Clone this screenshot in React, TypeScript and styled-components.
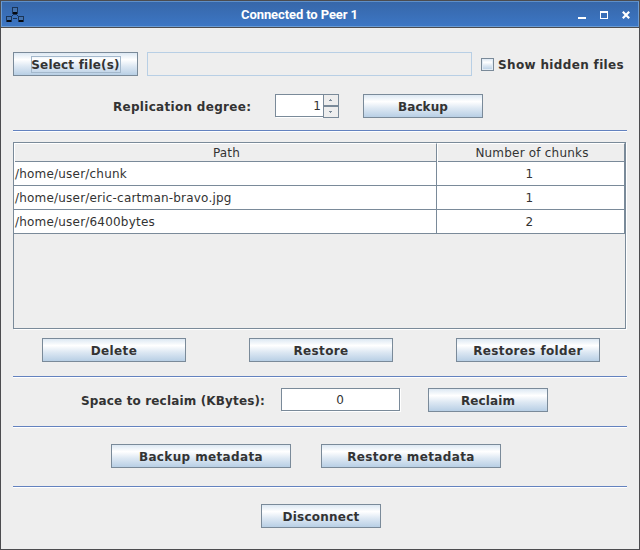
import React from 'react';
import styled, { createGlobalStyle } from 'styled-components';

const Global = createGlobalStyle`
  * { box-sizing: border-box; }
  body { margin: 0; background: #eeeeee; }
`;

const steel = '#7a8a99';
const ink = '#333333';

const Frame = styled.div`
  width: 640px;
  height: 550px;
  border: 1px solid #4c4c4f;
  background: #eeeeee;
  color: ${ink};
  font: 12px/16px 'DejaVu Sans', sans-serif;
  overflow: hidden;
`;

const TitleBar = styled.header`
  display: grid;
  grid-template-columns: 60px 1fr 60px;
  align-items: center;
  height: 26px;
  border: 1px solid #6a9bd4;
  border-top-color: #5e8fc9;
  background: linear-gradient(#3767a9, #3c76c4);
`;

const TitleEdge = styled.div`
  height: 1px;
  background: #4c4c4f;
`;

const Title = styled.h1`
  margin: 0;
  padding-top: 1px;
  padding-right: 41px;
  text-align: center;
  color: #ffffff;
  font: bold 13px/24px Roboto, sans-serif;
  letter-spacing: -0.1px;
`;

const PeerIcon = styled.svg`
  width: 20px;
  height: 18px;
  margin-left: 3px;
`;

const WindowControls = styled.svg`
  width: 60px;
  height: 24px;
`;

const Content = styled.main`
  display: flex;
  flex-direction: column;
  padding: 24px 12px 0;
`;

const Row = styled.div<{ $gap?: number; $indent?: number; $top?: number }>`
  display: flex;
  align-items: flex-start;
  height: 24px;
  gap: ${p => p.$gap ?? 0}px;
  margin-top: ${p => p.$top ?? 0}px;
  padding-left: ${p => p.$indent ?? 0}px;
`;

const Button = styled.button<{ $width: number; $spacing?: number }>`
  display: flex;
  align-items: center;
  justify-content: center;
  flex: none;
  width: ${p => p.$width}px;
  height: 24px;
  padding: 1px 0 0;
  border: 1px solid ${steel};
  border-radius: 0;
  background: linear-gradient(#dde8f3 0%, #ffffff 30%, #dde8f3 60%, #b8cfe5 100%);
  color: ${ink};
  font: bold 12px/16px 'DejaVu Sans', sans-serif;
  letter-spacing: ${p => p.$spacing ?? 0.37}px;
  white-space: nowrap;
`;

const FocusRing = styled.span`
  display: flex;
  justify-content: center;
  height: 17px;
  width: 90px;
  margin-top: -1px;
  border: 1px solid #a3b8cc;
  line-height: 16px;
`;

const DisabledField = styled.div`
  flex: none;
  width: 325px;
  height: 24px;
  margin: 0 9px;
  border: 1px solid #b8cfe5;
`;

const CheckLabel = styled.label`
  display: flex;
  align-items: center;
  gap: 4px;
  height: 25px;
  font-weight: bold;
  letter-spacing: 0.35px;
  white-space: nowrap;
`;

const CheckBox = styled.span`
  width: 13px;
  height: 13px;
  border: 1px solid ${steel};
  background: linear-gradient(#dde8f3, #ffffff 30%, #dde8f3 60%, #b8cfe5);
  box-shadow: inset 0 0 0 1px #e3ecf5;
`;

const Label = styled.span<{ $width: number; $spacing: number }>`
  flex: none;
  width: ${p => p.$width}px;
  font-weight: bold;
  letter-spacing: ${p => p.$spacing}px;
  line-height: 26px;
  white-space: nowrap;
`;

const Spinner = styled.div`
  display: flex;
  width: 64px;
  height: 24px;
  margin-right: 24px;
`;

const SpinnerValue = styled.span`
  width: 48px;
  height: 23px;
  padding-right: 2px;
  border: 1px solid ${steel};
  border-right: 0;
  background: #ffffff;
  box-shadow: 1px 1px #ffffff;
  text-align: right;
  line-height: 22px;
`;

const Arrows = styled.svg`
  width: 16px;
  height: 24px;
`;

const Separator = styled.div<{ $top: number }>`
  height: 2px;
  margin-top: ${p => p.$top}px;
  background: #ffffff;
  border-top: 1px solid #6382bf;
`;

const ScrollPane = styled.section`
  height: 187px;
  width: 613px;
  margin-top: 10px;
  border: 1px solid ${steel};
  box-shadow: 1px 1px #ffffff;
`;

const Record = styled.div`
  display: grid;
  grid-template-columns: 423px 188px;
  height: 24px;
  background: #ffffff;
  border-bottom: 1px solid ${steel};
  line-height: 24px;
`;

const HeaderRecord = styled(Record)`
  height: 19px;
  background: #eeeeee;
  line-height: 19px;
`;

const Cell = styled.span<{ $center?: boolean }>`
  height: 100%;
  padding-left: 1px;
  padding-right: ${p => (p.$center ? 3 : 0)}px;
  border-right: 1px solid ${steel};
  text-align: ${p => (p.$center ? 'center' : 'left')};
  letter-spacing: 0.2px;
`;

const HeaderCell = styled(Cell)`
  padding-left: 3px;
  padding-right: 0;
  border-top: 1px solid #ffffff;
  box-shadow: inset 1px 0 #ffffff;
`;

const ReclaimField = styled.div`
  width: 119px;
  height: 23px;
  margin-right: 28px;
  padding-right: 1px;
  border: 1px solid ${steel};
  background: #ffffff;
  box-shadow: 1px 1px #ffffff;
  text-align: center;
  line-height: 22px;
`;

const files = [
  { path: '/home/user/chunk', chunks: 1 },
  { path: '/home/user/eric-cartman-bravo.jpg', chunks: 1 },
  { path: '/home/user/6400bytes', chunks: 2 },
];

export default function App() {
  return (
    <>
      <Global />
      <Frame>
        <TitleBar>
          <PeerIcon viewBox="0 0 20 18" shapeRendering="crispEdges">
            <path d="M7.5 1.5h5v6h-5zM1.5 10.5h5v5h-5zM13.5 10.5h5v5h-5z" fill="#4472ad" stroke="#1b3557" />
            <path d="M8 6h4v2H8zM2 14h4v2H2zM14 14h4v2h-4z" fill="#050a12" />
            <path d="M7 9.5h1M8 8.5h4M12 9.5h1M8 12.5h4" fill="none" stroke="#1b3557" />
          </PeerIcon>
          <Title>Connected to Peer 1</Title>
          <WindowControls viewBox="0 0 60 24">
            <path d="M0 14h8v2H0z" fill="#fff" />
            <path d="M22 8h8v8h-8zM23 10v5h6v-5z" fill="#fff" fillRule="evenodd" />
            <path d="M44.8 8.8l6.4 6.4M51.2 8.8l-6.4 6.4" stroke="#fff" strokeWidth="2.2" />
          </WindowControls>
        </TitleBar>
        <TitleEdge />
        <Content>
          <Row>
            <Button $width={125} $spacing={0.2}><FocusRing>Select file(s)</FocusRing></Button>
            <DisabledField />
            <CheckLabel><CheckBox />Show hidden files</CheckLabel>
          </Row>
          <Row $top={18} $indent={100}>
            <Label $width={162} $spacing={0.3}>Replication degree:</Label>
            <Spinner>
              <SpinnerValue>1</SpinnerValue>
              <Arrows viewBox="0 0 16 24" shapeRendering="crispEdges">
                <path d="M.5.5h15v11H.5zM.5 12.5h15v11H.5z" fill="#eee" stroke={steel} />
                <path d="M7 5h1v1h1v1H6V6h1zM6 17h3v1H8v1H7v-1H6z" fill={steel} />
              </Arrows>
            </Spinner>
            <Button $width={120} $spacing={0.05}>Backup</Button>
          </Row>
          <Separator $top={12} />
          <ScrollPane>
            <HeaderRecord>
              <HeaderCell $center>Path</HeaderCell>
              <HeaderCell $center>Number of chunks</HeaderCell>
            </HeaderRecord>
            {files.map(f => (
              <Record key={f.path}>
                <Cell>{f.path}</Cell>
                <Cell $center>{f.chunks}</Cell>
              </Record>
            ))}
          </ScrollPane>
          <Row $top={9} $indent={29} $gap={63}>
            <Button $width={144}>Delete</Button>
            <Button $width={144}>Restore</Button>
            <Button $width={144}>Restores folder</Button>
          </Row>
          <Separator $top={14} />
          <Row $top={10} $indent={68}>
            <Label $width={200} $spacing={0.15}>Space to reclaim (KBytes):</Label>
            <ReclaimField>0</ReclaimField>
            <Button $width={120} $spacing={0.1}>Reclaim</Button>
          </Row>
          <Separator $top={14} />
          <Row $top={16} $indent={98} $gap={30}>
            <Button $width={180}>Backup metadata</Button>
            <Button $width={180}>Restore metadata</Button>
          </Row>
          <Separator $top={18} />
          <Row $top={16} $indent={248}>
            <Button $width={120} $spacing={0.25}>Disconnect</Button>
          </Row>
        </Content>
      </Frame>
    </>
  );
}
